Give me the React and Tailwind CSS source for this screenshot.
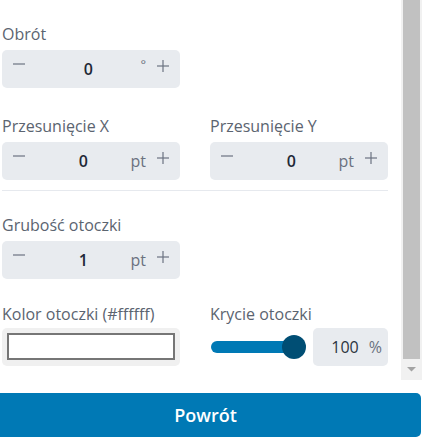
import React from "react";

const FONT = "font-['Open_Sans','Noto_Sans',sans-serif]";

function Minus() {
    return (
        <svg width="12" height="12" viewBox="0 0 12 12" className="-mt-[10px]">
            <line x1="0" y1="6" x2="12" y2="6" stroke="#6b7280" strokeWidth="1.2" />
        </svg>
    );
}

function Plus() {
    return (
        <svg width="12" height="12" viewBox="0 0 12 12" className="-mt-[6px]">
            <line x1="0" y1="6" x2="12" y2="6" stroke="#6b7280" strokeWidth="1.2" />
            <line x1="6" y1="0" x2="6" y2="12" stroke="#6b7280" strokeWidth="1.2" />
        </svg>
    );
}

function Stepper({ value, unit }) {
    return (
        <div className="flex items-center h-[38px] rounded-[5px] bg-[#e8ebef]">
            <div className="w-[34px] flex justify-center items-center">
                <Minus />
            </div>
            <div className="flex-1 text-center text-[16px] font-semibold text-[#1f2937]">{value}</div>
            {unit === "°" ? (
                <span className="text-[13px] text-[#6b7280] -mt-[8px]">°</span>
            ) : (
                <span className="text-[16px] text-[#6b7280]">{unit}</span>
            )}
            <div className="w-[34px] flex justify-center items-center">
                <Plus />
            </div>
        </div>
    );
}

function Field({ label, children, gap = "mb-[6px]" }) {
    return (
        <div className="w-[178px]">
            <div className={`text-[16px] leading-[20px] text-[#5b6470] whitespace-nowrap ${gap}`}>{label}</div>
            {children}
        </div>
    );
}

function Scrollbar() {
    return (
        <div className="w-[21px] h-[380px] bg-[#f1f1f1] flex flex-col">
            <div className="ml-[2px] w-[17px] h-[359px] bg-[#c1c1c1]" />
            <div className="flex-1 flex items-center justify-center pl-[2px] pr-[2px]">
                <svg width="9" height="5" viewBox="0 0 9 5">
                    <polygon points="0,0 9,0 4.5,4.5" fill="#a3a3a3" />
                </svg>
            </div>
        </div>
    );
}

export default function App() {
    return (
        <div className={`w-[422px] h-[448px] bg-white overflow-hidden ${FONT}`}>
            <div className="flex h-[380px]">
                <div className="w-[401px] pl-[2px] pt-[24px]">
                    {/* rotation */}
                    <Field label="Obrót">
                        <Stepper value="0" unit="°" />
                    </Field>

                    {/* offsets */}
                    <div className="flex gap-[30px] mt-[28px]">
                        <Field label="Przesunięcie X">
                            <Stepper value="0" unit="pt" />
                        </Field>
                        <Field label="Przesunięcie Y">
                            <Stepper value="0" unit="pt" />
                        </Field>
                    </div>

                    <div className="w-[386px] h-px bg-[#e6e9ee] mt-[10px]" />

                    {/* stroke */}
                    <div className="mt-[24px]">
                        <Field label="Grubość otoczki">
                            <Stepper value="1" unit="pt" />
                        </Field>
                    </div>

                    <div className="flex gap-[30px] mt-[25px]">
                        <Field label="Kolor otoczki (#ffffff)" gap="mb-[4px]">
                            <div className="h-[38px] rounded-[5px] bg-[#f0f0f0] px-[5px] pt-[5px]">
                                <div className="h-[27px] bg-white border-2 border-[#767676]" />
                            </div>
                        </Field>
                        <Field label="Krycie otoczki" gap="mb-[4px]">
                            <div className="flex items-center gap-[8px] h-[38px]">
                                <div className="relative w-[95px] h-[24px] flex items-center">
                                    <div className="w-[84px] h-[12px] rounded-full bg-[#0079b5] ml-[1px]" />
                                    <div className="absolute left-[72px] top-0 w-[24px] h-[24px] rounded-full bg-[#004e74]" />
                                </div>
                                <div className="flex-1 h-[38px] rounded-[5px] bg-[#e8ebef] flex items-center justify-end pr-[6px]">
                                    <span className="text-[16px] font-medium text-[#2b3440]">100</span>
                                    <span className="text-[16px] text-[#6b7280] ml-[10px]">%</span>
                                </div>
                            </div>
                        </Field>
                    </div>
                </div>
                <Scrollbar />
            </div>

            <div className="pt-[13px]">
                <button className="-ml-[10px] w-[431px] h-[44px] rounded-[5px] bg-[#0079b5] text-white text-[18px] font-semibold">
                    Powrót
                </button>
            </div>
        </div>
    );
}
